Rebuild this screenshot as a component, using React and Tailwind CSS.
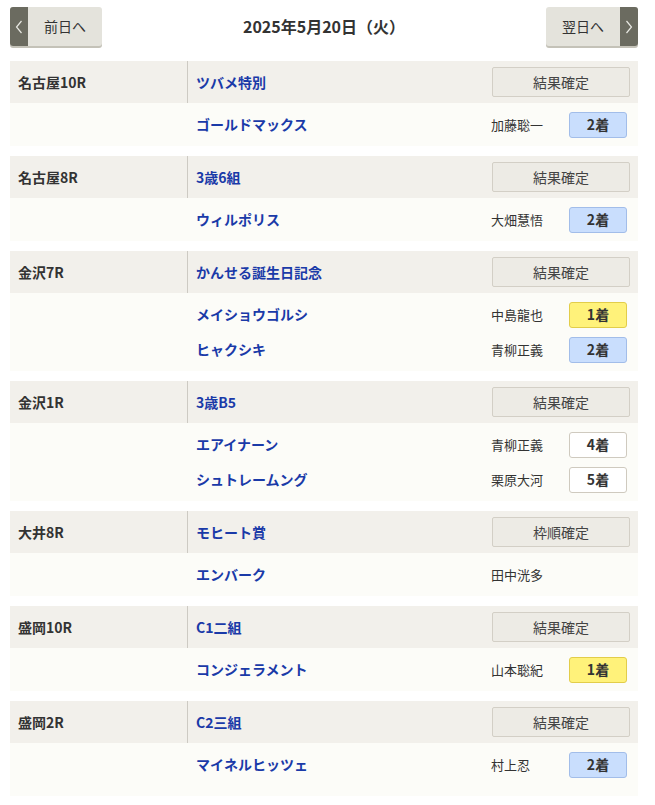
import React from 'react';

const races = [
    { place: '名古屋10R', name: 'ツバメ特別', status: '結果確定', horses: [{ horse: 'ゴールドマックス', jockey: '加藤聡一', rank: 2 }] },
    { place: '名古屋8R', name: '3歳6組', status: '結果確定', horses: [{ horse: 'ウィルポリス', jockey: '大畑慧悟', rank: 2 }] },
    {
        place: '金沢7R', name: 'かんせる誕生日記念', status: '結果確定', horses: [
            { horse: 'メイショウゴルシ', jockey: '中島龍也', rank: 1 },
            { horse: 'ヒャクシキ', jockey: '青柳正義', rank: 2 },
        ]
    },
    {
        place: '金沢1R', name: '3歳B5', status: '結果確定', horses: [
            { horse: 'エアイナーン', jockey: '青柳正義', rank: 4 },
            { horse: 'シュトレームング', jockey: '栗原大河', rank: 5 },
        ]
    },
    { place: '大井8R', name: 'モヒート賞', status: '枠順確定', horses: [{ horse: 'エンバーク', jockey: '田中洸多', rank: null }] },
    { place: '盛岡10R', name: 'C1二組', status: '結果確定', horses: [{ horse: 'コンジェラメント', jockey: '山本聡紀', rank: 1 }] },
    { place: '盛岡2R', name: 'C2三組', status: '結果確定', horses: [{ horse: 'マイネルヒッツェ', jockey: '村上忍', rank: 2 }] },
];

const RankBadge = ({ rank }) => {
    if (!rank) return null;
    let cls = 'bg-white border-[#cfcabf]';
    if (rank === 1) cls = 'bg-[#fff27a] border-[#e2cd4a]';
    else if (rank === 2) cls = 'bg-[#c9defd] border-[#a2bde9]';
    return (
        <span className={`flex items-center justify-center w-[58px] h-[26px] rounded-[3px] border text-[14px] font-bold text-[#333] ${cls}`}>
            {rank}着
        </span>
    );
};

const Chevron = ({ dir }) => (
    <svg width="8" height="14" viewBox="0 0 8 14" fill="none">
        <path d={dir === 'left' ? 'M6.5 1 L1.5 7 L6.5 13' : 'M1.5 1 L6.5 7 L1.5 13'} stroke="#e8e8e2" strokeWidth="1.2" />
    </svg>
);

const NavButton = ({ label, side }) => (
    <button className="flex h-[39px] w-[92px] rounded-[3px] overflow-hidden bg-[#e4e3dc] shadow-[0_2px_0_#c4c2b8] text-[14px] text-[#333]">
        {side === 'left' && (
            <span className="w-[18px] h-full bg-[#6b6b60] flex items-center justify-center"><Chevron dir="left" /></span>
        )}
        <span className="flex-1 h-full flex items-center justify-center">{label}</span>
        {side === 'right' && (
            <span className="w-[18px] h-full bg-[#6b6b60] flex items-center justify-center"><Chevron dir="right" /></span>
        )}
    </button>
);

export default function App() {
    return (
        <div className="w-[655px] min-h-[805px] bg-white px-[10px] pt-[7px] text-[#333]" style={{ fontFamily: '"Noto Sans CJK JP", "Noto Sans", sans-serif' }}>
            <div className="flex items-center justify-between w-[628px]">
                <NavButton label="前日へ" side="left" />
                <h1 className="text-[16px] font-bold text-[#333] -mt-[2px]">2025年5月20日（火）</h1>
                <NavButton label="翌日へ" side="right" />
            </div>

            <div className="mt-[15px] w-[628px]">
                {races.map((race, idx) => (
                    <div key={idx} className="mb-[10px]">
                        <div className="flex items-center h-[42px] bg-[#f2f0eb]">
                            <div className="w-[178px] h-full flex items-center pl-[8px] border-r border-[#cdcac3] text-[14px] font-bold text-[#333]">
                                {race.place}
                            </div>
                            <div className="flex-1 pl-[8px] text-[14px] font-bold text-[#1a3aa8]">{race.name}</div>
                            <div className="mr-[8px] w-[138px] h-[30px] flex items-center justify-center bg-[#edebe5] border border-[#d3cfc6] rounded-[2px] text-[14px] text-[#444]">
                                {race.status}
                            </div>
                        </div>
                        <div className={`bg-[#fcfcf8] pt-[4px] ${idx === races.length - 1 ? 'pb-[14px]' : 'pb-[4px]'}`}>
                            {race.horses.map((h, i) => (
                                <div key={i} className="flex items-center h-[35px]">
                                    <div className="w-[186px]" />
                                    <div className="flex-1 text-[14px] font-bold text-[#1a3aa8]">{h.horse}</div>
                                    <div className="w-[78px] text-[13px] text-[#333]">{h.jockey}</div>
                                    <div className="w-[58px] mr-[11px]">
                                        <RankBadge rank={h.rank} />
                                    </div>
                                </div>
                            ))}
                        </div>
                    </div>
                ))}
            </div>
        </div>
    );
}
